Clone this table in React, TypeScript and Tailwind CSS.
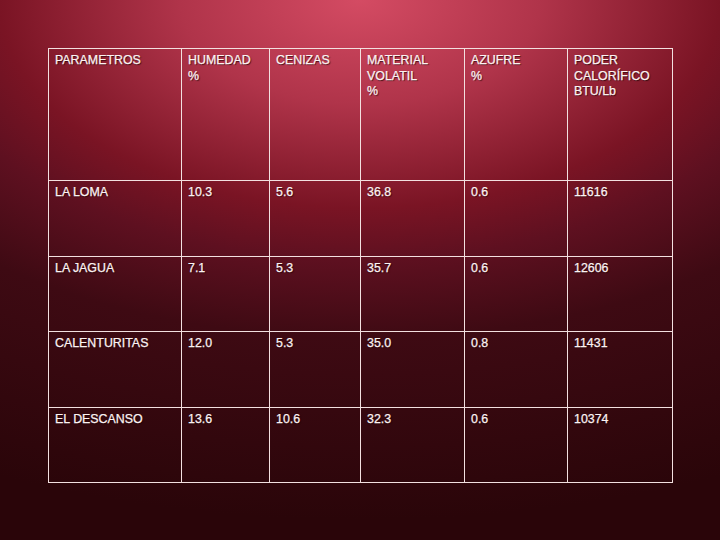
import React from 'react'

const header = [
  ['PARAMETROS'],
  ['HUMEDAD', '%'],
  ['CENIZAS'],
  ['MATERIAL', 'VOLATIL', '%'],
  ['AZUFRE', '%'],
  ['PODER', 'CALORÍFICO', 'BTU/Lb'],
]

const rows = [
  ['LA LOMA', '10.3', '5.6', '36.8', '0.6', '11616'],
  ['LA JAGUA', '7.1', '5.3', '35.7', '0.6', '12606'],
  ['CALENTURITAS', '12.0', '5.3', '35.0', '0.8', '11431'],
  ['EL DESCANSO', '13.6', '10.6', '32.3', '0.6', '10374'],
]

const rowHeights = ['h-[76px]', 'h-[75px]', 'h-[76px]', 'h-[75px]']

const App: React.FC = () => {
  return (
    <div className="w-[720px] h-[540px] overflow-hidden bg-[radial-gradient(ellipse_900px_520px_at_50%_0%,#d44b63_0%,#b0344a_20%,#7a1424_40%,#5e1020_50%,#3e0a13_65%,#2a0509_100%)] pt-[48px] pl-[48px]">
      <table className="table-fixed border-collapse w-[624px] text-[12.4px] leading-[15.5px] text-[#fcf2f2] font-['Liberation_Sans',Arial,sans-serif] [-webkit-text-stroke:0.25px_#fcf2f2] [text-shadow:1px_1px_1px_rgba(30,0,6,0.75)]">
        <colgroup>
          <col className="w-[133px]" />
          <col className="w-[88px]" />
          <col className="w-[91px]" />
          <col className="w-[104px]" />
          <col className="w-[103px]" />
          <col className="w-[105px]" />
        </colgroup>
        <tbody>
          <tr className="h-[132px]">
            {header.map((lines, i) => (
              <td key={i} className="border border-[#f3e0e0] align-top px-[6px] pt-[4px]">
                {lines.map((l) => (
                  <div key={l}>{l}</div>
                ))}
              </td>
            ))}
          </tr>
          {rows.map((r, ri) => (
            <tr key={r[0]} className={rowHeights[ri]}>
              {r.map((c, ci) => (
                <td key={ci} className="border border-[#f3e0e0] align-top px-[6px] pt-[4px]">
                  {c}
                </td>
              ))}
            </tr>
          ))}
        </tbody>
      </table>
    </div>
  )
}

export default App
